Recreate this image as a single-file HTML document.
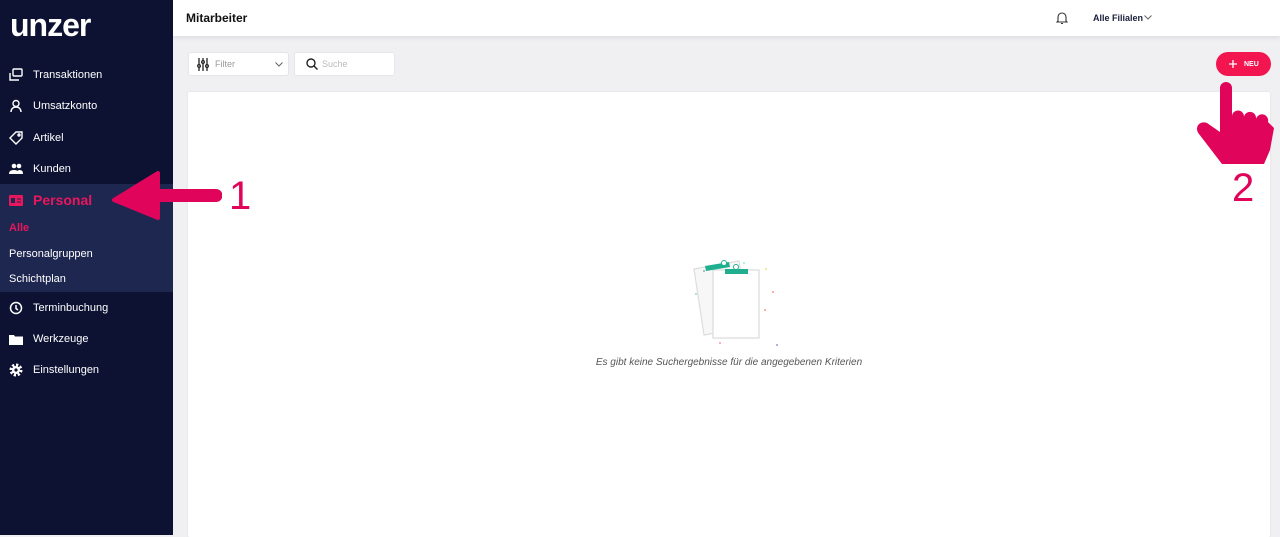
<!DOCTYPE html>
<html><head><style>
*{box-sizing:border-box;margin:0;padding:0}
body{width:1280px;height:535px;overflow:hidden;font-family:"Liberation Sans",sans-serif;background:#f0f0f2;position:relative}
.sb{position:absolute;left:0;top:0;width:173px;height:535px;background:#0d1233;color:#fff}
.logo{position:absolute;left:10px;top:7px;font-size:32px;font-weight:bold;letter-spacing:-1px}
.it{position:absolute;left:0;width:173px;height:20px;font-size:11px;display:flex;align-items:center}
.it svg{position:absolute;left:9px}
.it span{position:absolute;left:33px}
.grp{position:absolute;left:0;top:184px;width:173px;height:108px;background:#1e2750}
.sub{position:absolute;left:9px;font-size:11px}
.hd{position:absolute;left:173px;top:0;width:1107px;height:36px;background:#fff;box-shadow:0 2px 4px rgba(0,0,0,.08)}
.card{position:absolute;left:188px;top:92px;width:1082px;height:445px;background:#fff;border-radius:2px;box-shadow:0 0 2px rgba(0,0,0,.08)}
.box{position:absolute;top:52px;height:24px;background:#fff;border-radius:3px;border:1px solid #e6e6ea;font-size:9px;color:#999}
</style></head><body>
<div class="sb">
<div class="logo">unzer</div>
<div class="it" style="top:65px"><svg width="14" height="14" viewBox="0 0 14 14" fill="none" stroke="#fff" stroke-width="1.4"><rect x="4" y="1" width="9" height="7" rx="1"/><path d="M1 5v7h9"/></svg><span>Transaktionen</span></div>
<div class="it" style="top:96px"><svg width="14" height="14" viewBox="0 0 14 14" fill="none" stroke="#fff" stroke-width="1.4"><circle cx="7" cy="4.5" r="3"/><path d="M2 13c0-3 2-5 5-5s5 2 5 5"/></svg><span>Umsatzkonto</span></div>
<div class="it" style="top:128px"><svg width="14" height="14" viewBox="0 0 14 14" fill="none" stroke="#fff" stroke-width="1.4"><path d="M7 1h6v6l-6 6-6-6z"/><circle cx="10" cy="4" r="1"/></svg><span>Artikel</span></div>
<div class="it" style="top:159px"><svg width="14" height="14" viewBox="0 0 14 14" fill="#fff"><circle cx="5" cy="4" r="2.3"/><circle cx="10" cy="4" r="2.3"/><path d="M0 12c0-3 2-4 5-4s5 1 5 4zM8 12c0-2 0-3 2-4 3 0 4 1 4 4z"/></svg><span>Kunden</span></div>
<div class="grp"></div>
<div class="it" style="top:190px;color:#e8175d;font-size:14px;font-weight:bold"><svg width="14" height="14" viewBox="0 0 14 14"><rect x="0" y="2" width="14" height="11" rx="1" fill="#e8175d"/><rect x="2" y="5" width="4" height="5" fill="#1e2750"/><path d="M8 6h4M8 9h4" stroke="#1e2750"/></svg><span>Personal</span></div>
<div class="sub" style="top:222px;color:#e8175d;font-weight:bold">Alle</div>
<div class="sub" style="top:248px">Personalgruppen</div>
<div class="sub" style="top:273px">Schichtplan</div>
<div class="it" style="top:298px"><svg width="14" height="14" viewBox="0 0 14 14" fill="none" stroke="#fff" stroke-width="1.5"><circle cx="7" cy="7" r="5.5"/><path d="M7 4v3.5l2 1.5"/></svg><span>Terminbuchung</span></div>
<div class="it" style="top:329px"><svg width="14" height="14" viewBox="0 0 14 14" fill="#fff"><path d="M0 3h5l1 1.5h8V13H0z"/></svg><span>Werkzeuge</span></div>
<div class="it" style="top:360px"><svg width="14" height="14" viewBox="0 0 14 14"><circle cx="7" cy="7" r="5" fill="none" stroke="#fff" stroke-width="3" stroke-dasharray="2.2 1.7"/><circle cx="7" cy="7" r="4" fill="#fff"/><circle cx="7" cy="7" r="1.6" fill="#0d1233"/></svg><span>Einstellungen</span></div>
</div>
<div class="hd">
<div style="position:absolute;left:13px;top:11px;font-size:12px;font-weight:bold;color:#111">Mitarbeiter</div>
<svg style="position:absolute;left:883px;top:12px" width="12" height="13" viewBox="0 0 12 13" fill="none" stroke="#333" stroke-width="1.1"><path d="M2 9V5a4 4 0 018 0v4l1 1H1z M5 11.5h2"/></svg>
<div style="position:absolute;left:920px;top:13px;font-size:9px;font-weight:bold;color:#1a1f3a">Alle Filialen</div>
<svg style="position:absolute;left:971px;top:15px" width="8" height="5" viewBox="0 0 8 5" fill="none" stroke="#666"><path d="M0.5 0.5l3.5 3.5 3.5-3.5"/></svg>
</div>
<div class="box" style="left:188px;width:101px"><svg style="position:absolute;left:8px;top:5px" width="12" height="13" viewBox="0 0 12 13" stroke="#222" stroke-width="1.3" fill="none"><path d="M2 0v13M6 0v13M10 0v13"/><circle cx="2" cy="8" r="1.3" fill="#fff"/><circle cx="6" cy="4" r="1.3" fill="#fff"/><circle cx="10" cy="8" r="1.3" fill="#fff"/></svg><span style="position:absolute;left:26px;top:6px">Filter</span><svg style="position:absolute;left:86px;top:9px" width="8" height="5" viewBox="0 0 8 5" fill="none" stroke="#666"><path d="M0.5 0.5l3.5 3.5 3.5-3.5"/></svg></div>
<div class="box" style="left:294px;width:101px"><svg style="position:absolute;left:11px;top:5px" width="12" height="12" viewBox="0 0 12 12" stroke="#222" stroke-width="1.4" fill="none"><circle cx="5" cy="5" r="4"/><path d="M8 8l3.5 3.5"/></svg><span style="position:absolute;left:27px;top:6px;color:#bbb">Suche</span></div>
<div style="position:absolute;left:1216px;top:52px;width:55px;height:24px;background:#f2154f;border-radius:12px;color:#fff"><svg style="position:absolute;left:13px;top:8px" width="8" height="8" viewBox="0 0 8 8" stroke="#fff" stroke-width="1.3"><path d="M4 0v8M0 4h8"/></svg><span style="position:absolute;left:28px;top:9px;font-size:7px;font-weight:bold;line-height:8px">NEU</span></div>
<div class="card"></div>
<svg style="position:absolute;left:680px;top:255px" width="100" height="95" viewBox="0 0 100 95">
<path d="M14 14l45-8 10 66-45 8z" fill="#f7f7f7" stroke="#ddd" stroke-width="1.2"/>
<rect x="33" y="15" width="46" height="68" fill="#fff" stroke="#ddd" stroke-width="1.3"/>
<path d="M25 11l24-4 1 5-24 4z" fill="#1fae8e"/>
<rect x="45" y="14" width="23" height="5" fill="#1fae8e"/>
<circle cx="44" cy="8" r="2.5" fill="#fff" stroke="#1fae8e" stroke-width="1"/>
<circle cx="56" cy="12" r="2.5" fill="#fff" stroke="#1fae8e" stroke-width="1"/>
<circle cx="24" cy="16" r="1" fill="#8ab"/><circle cx="16" cy="39" r="1" fill="#9dc"/><circle cx="93" cy="37" r="1" fill="#f99"/><circle cx="85" cy="55" r="1" fill="#f99"/><circle cx="40" cy="88" r="1" fill="#f99"/><circle cx="97" cy="90" r="1" fill="#99d"/><circle cx="86" cy="14" r="1" fill="#ed8"/><circle cx="64" cy="8" r="1" fill="#9ed"/>
</svg>
<div style="position:absolute;left:188px;width:1082px;top:357px;text-align:center;font-size:10px;font-style:italic;color:#555">Es gibt keine Suchergebnisse für die angegebenen Kriterien</div>
<svg style="position:absolute;left:110px;top:170px" width="112" height="58" viewBox="0 0 112 58"><path d="M4 30L48 3v18h58a4 4 0 010 9v0H48v18z" fill="#e0055a" stroke="#e0055a" stroke-width="4" stroke-linejoin="round"/></svg>
<div style="position:absolute;left:229px;top:174px;font-size:40px;color:#e0055a">1</div>
<svg style="position:absolute;left:1196px;top:82px" width="80" height="86" viewBox="0 0 80 86"><path d="M24 6a6 6 0 0112 0V34a6 6 0 0112 1a6 6 0 0112 2a6 6 0 0112 3l6 6-4 22-6 14H26L3 52C-2 46 3 38 11 41L24 50z" fill="#e0055a"/></svg>
<div style="position:absolute;left:1232px;top:166px;font-size:40px;color:#e0055a">2</div>
</body></html>
